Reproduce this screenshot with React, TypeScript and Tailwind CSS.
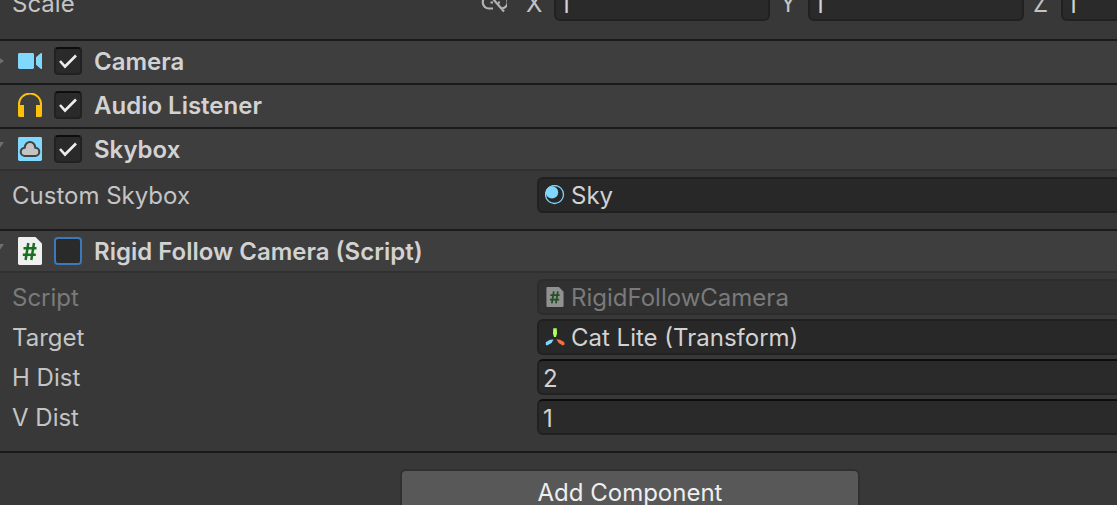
import { useState, type ReactNode } from "react";

function CameraIcon() {
  return (
    <svg viewBox="0 0 24 24" className="h-6 w-6" fill="#80d8ff" aria-hidden="true">
      <rect x="0" y="4" width="16" height="16" rx="1.4" />
      <path d="M18 8.2 22.6 4.2Q23.4 4 24 4V20Q23.4 20 22.6 19.8L18 15.8Z" />
    </svg>
  );
}

function HeadphonesIcon() {
  return (
    <svg viewBox="0 0 24 24" className="h-6 w-6" aria-hidden="true">
      <path d="M1 15V11a11 10.4 0 0 1 22 0V15" fill="none" stroke="#ffc107" strokeWidth="2" />
      <path d="M0 12H6V24H1.4Q0 24 0 22.6ZM24 12H18V24H22.6Q24 24 24 22.6Z" fill="#ffc107" />
    </svg>
  );
}

function SkyboxIcon() {
  return (
    <svg viewBox="0 0 24 24" className="h-6 w-6" aria-hidden="true">
      <rect width="24" height="24" rx="1.4" fill="#80d8ff" />
      <path
        d="M7 19A4.1 4.1 0 0 1 6.700 10.700C7.200 7.300 9 5 12 5S16.800 7.300 17.300 10.700A4.100 4.100 0 0 1 17 19Z"
        fill="#c4c4c4"
        stroke="#424242"
        strokeWidth="2"
      />
    </svg>
  );
}

function ScriptIcon({ small = false }: { small?: boolean }) {
  return (
    <svg viewBox="0 0 24 28" className={small ? "h-5 w-[18px] opacity-50" : "h-7 w-6"} aria-hidden="true">
      <path d="M1.400 0H17.500L24 6.500V26.600Q24 28 22.600 28H1.400Q0 28 0 26.600V1.400Q0 0 1.400 0Z" fill="#f0f0f0" />
      <path d="M10.300 6 7.600 23M16 6 13.300 23M5.500 11.300H18.500M4.800 17.700H17.800" fill="none" stroke="#1b6e20" strokeWidth="2.500" />
    </svg>
  );
}

function MaterialIcon() {
  return (
    <svg viewBox="0 0 20 20" className="h-5 w-5" aria-hidden="true">
      <circle cx="9.500" cy="9.500" r="9" fill="none" stroke="#80d8ff" strokeWidth="1.300" />
      <circle cx="7" cy="7.400" r="6.200" fill="#80d8ff" />
    </svg>
  );
}

function TransformIcon() {
  return (
    <svg viewBox="0 0 20 20" className="h-5 w-5" aria-hidden="true">
      <path d="M8.300 1.200H11.700L12 6.500 11 10H9L8 6.500Z" fill="#b2ff59" />
      <path d="M8.600 12.600 6.500 16 2 18.400.800 17.800V15.200L5 12.700Z" fill="#80d8ff" />
      <path d="M11.400 12.200 15 12.700 19.400 15.300V17.800L17.800 18.400 13.700 16Z" fill="#ff6e40" />
    </svg>
  );
}

function UnlinkIcon() {
  return (
    <svg viewBox="0 0 26 24" className="h-6 w-[26px]" fill="none" stroke="#b4b4b4" strokeWidth="2.200" aria-hidden="true">
      <path d="M12 17.500H8A5.500 5.500 0 0 1 8 5H11M16 5H20A6 6 0 0 1 21 17.300M9.500 11.500H12M17 11.500H19M8.500 4 23 20.500" />
    </svg>
  );
}

function Foldout({ open, name }: { open: boolean; name: string }) {
  return (
    <button type="button" aria-label={name} aria-expanded={open} className="flex h-6 w-[18px] shrink-0 items-center">
      <svg viewBox="0 0 18 24" className="h-6 w-[18px]" fill="#6e6e6e" aria-hidden="true">
        {open ? <path d="M-10 5H4L-3 15Z" /> : <path d="M-6 5 4 12-6 19Z" />}
      </svg>
    </button>
  );
}

type HeaderProps = {
  title: string;
  icon: ReactNode;
  enabled?: boolean;
  open?: boolean;
  foldout?: boolean;
};

function ComponentHeader({ title, icon, enabled = false, open = false, foldout = true }: HeaderProps) {
  const [checked, setChecked] = useState(enabled);
  return (
    <div
      className={
        open
          ? "border-y-2 border-t-[#1a1a1a] border-b-[#303030] bg-[#3e3e3e]"
          : "border-t-2 border-[#1a1a1a] bg-[#3e3e3e] pb-0.5"
      }
    >
      <div className="flex h-10 items-center">
        {foldout ? <Foldout open={open} name={`Toggle ${title}`} /> : <span className="w-[18px]" />}
        {icon}
        <label className="ml-3 flex items-center gap-3 text-2xl font-semibold text-[#d2d2d2]">
          <span className="grid">
            <input
              type="checkbox"
              checked={checked}
              onChange={(e) => setChecked(e.target.checked)}
              className="col-start-1 row-start-1 h-7 w-7 appearance-none rounded border-2 border-[#3a79bb] bg-[#2a2a2a] checked:border-[#212121] checked:border-t-[#0d0d0d]"
            />
            {checked && (
              <svg
                viewBox="0 0 28 28"
                className="pointer-events-none col-start-1 row-start-1 h-7 w-7"
                fill="none"
                stroke="#eeeeee"
                strokeWidth="2.600"
                aria-hidden="true"
              >
                <path d="M6 14 11 19.500 22 8.500" />
              </svg>
            )}
          </span>
          <span className="pt-0.5">{title}</span>
        </label>
      </div>
    </div>
  );
}

const inputStyle =
  "h-9 min-w-0 border-2 border-[#212121] border-t-[#0d0d0d] bg-[#2a2a2a] px-1 pt-0.5 text-2xl text-[#d2d2d2] outline-none";

function NumberRow({ id, label, value }: { id: string; label: string; value: string }) {
  return (
    <div className="flex items-center">
      <label htmlFor={id} className="w-[525px] shrink-0 pt-0.5">
        {label}
      </label>
      <input id={id} defaultValue={value} className={`${inputStyle} flex-1 rounded-l-md border-r-0`} />
    </div>
  );
}

type ObjectRowProps = { label: string; value: string; icon: ReactNode; disabled?: boolean };

function ObjectRow({ label, value, icon, disabled = false }: ObjectRowProps) {
  return (
    <div className={disabled ? "flex items-center text-[#7a7a7a]" : "flex items-center"}>
      <span className="w-[525px] shrink-0 pt-0.5">{label}</span>
      <button
        type="button"
        disabled={disabled}
        aria-label={`${label}: ${value}`}
        className={
          disabled
            ? "flex h-9 min-w-0 flex-1 items-center gap-1.5 rounded-l-md border-2 border-r-0 border-[#2d2d2d] bg-[#313131] pl-1.5"
            : "flex h-9 min-w-0 flex-1 items-center gap-1.5 rounded-l-md border-2 border-r-0 border-[#202020] bg-[#282828] pl-1.5 text-[#d2d2d2]"
        }
      >
        <span className="flex w-5 shrink-0 justify-center">{icon}</span>
        <span className="truncate pt-0.5">{value}</span>
      </button>
    </div>
  );
}

export default function App() {
  return (
    <main className="h-screen overflow-hidden bg-[#383838] font-['Inter',sans-serif] text-2xl text-[#c4c4c4]">
      <div className="-mt-[15px] flex items-center pb-[18px] pl-3">
        <span className="w-[469px] shrink-0 pt-0.5">Scale</span>
        <button type="button" aria-label="Constrain proportions" className="w-[45px] shrink-0">
          <UnlinkIcon />
        </button>
        <label className="flex items-center">
          <span className="w-7 pt-0.5">X</span>
          <input defaultValue="1" className={`${inputStyle} w-[216px] rounded-md`} />
        </label>
        <label className="flex items-center pl-2.5">
          <span className="w-7 pt-0.5">Y</span>
          <input defaultValue="1" className={`${inputStyle} w-[216px] rounded-md`} />
        </label>
        <label className="flex min-w-0 flex-1 items-center pl-[9px]">
          <span className="w-7 shrink-0 pt-0.5">Z</span>
          <input defaultValue="1" className={`${inputStyle} w-full rounded-l-md border-r-0`} />
        </label>
      </div>

      <ComponentHeader title="Camera" icon={<CameraIcon />} enabled />
      <ComponentHeader title="Audio Listener" icon={<HeadphonesIcon />} enabled foldout={false} />

      <ComponentHeader title="Skybox" icon={<SkyboxIcon />} enabled open />
      <div className="pt-1.5 pb-4 pl-3">
        <ObjectRow label="Custom Skybox" value="Sky" icon={<MaterialIcon />} />
      </div>

      <ComponentHeader title="Rigid Follow Camera (Script)" icon={<ScriptIcon />} open />
      <div className="flex flex-col gap-1 border-b-2 border-[#1a1a1a] pt-1.5 pb-4 pl-3">
        <ObjectRow label="Script" value="RigidFollowCamera" icon={<ScriptIcon small />} disabled />
        <ObjectRow label="Target" value="Cat Lite (Transform)" icon={<TransformIcon />} />
        <NumberRow id="h-dist" label="H Dist" value="2" />
        <NumberRow id="v-dist" label="V Dist" value="1" />
      </div>

      <div className="flex justify-center pt-4 pl-[143px]">
        <button
          type="button"
          className="h-12 w-[460px] rounded-md border-2 border-[#303030] bg-[#585858] text-[#eeeeee]"
        >
          Add Component
        </button>
      </div>
    </main>
  );
}
